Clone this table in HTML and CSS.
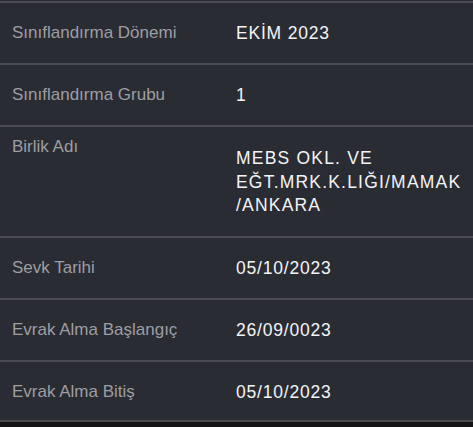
FILE: index.html
```html
<!DOCTYPE html>
<html lang="tr">
<head>
<meta charset="utf-8">
<link rel="stylesheet" href="styles.css">
</head>
<body>
<div class="sheet">
  <div class="row">
    <div class="label">Sınıflandırma Dönemi</div>
    <div class="value">EKİM 2023</div>
  </div>
  <div class="row">
    <div class="label">Sınıflandırma Grubu</div>
    <div class="value">1</div>
  </div>
  <div class="row row-tall">
    <div class="label">Birlik Adı</div>
    <div class="value">
      <span class="line">MEBS OKL. VE</span>
      <span class="line">EĞT.MRK.K.LIĞI/MAMAK</span>
      <span class="line">/ANKARA</span>
    </div>
  </div>
  <div class="row">
    <div class="label">Sevk Tarihi</div>
    <div class="value">05/10/2023</div>
  </div>
  <div class="row">
    <div class="label">Evrak Alma Başlangıç</div>
    <div class="value">26/09/0023</div>
  </div>
  <div class="row">
    <div class="label">Evrak Alma Bitiş</div>
    <div class="value">05/10/2023</div>
  </div>
</div>
</body>
</html>
```

FILE: styles.css
```css
html, body {
  margin: 0;
  padding: 0;
  background: #141416;
}
body {
  width: 473px;
  height: 427px;
  overflow: hidden;
}
.sheet {
  background: #2a2c33;
  padding-top: 1px;
}
.row {
  display: grid;
  grid-template-columns: 224px 1fr;
  align-items: start;
  border-top: 2px solid #4a4c52;
  padding: 20px 0 20px 12px;
  box-sizing: border-box;
  height: 62px;
}
.row:last-child {
  border-bottom: 2px solid #4a4c52;
  height: 62px;
}
.row-tall {
  height: 111px;
}
.row-tall .label {
  margin-top: -10px;
}
.row-tall .value {
  line-height: 23.5px;
  letter-spacing: 1.2px;
}
.label {
  font-family: "Liberation Sans", Arial, sans-serif;
  font-size: 17px;
  line-height: 20px;
  color: #9d9ea3;
  white-space: nowrap;
}
.value {
  font-family: "Liberation Sans", Arial, sans-serif;
  font-size: 17.5px;
  letter-spacing: 0.8px;
  line-height: 20px;
  color: #f4f4f6;
  white-space: nowrap;
}
.line {
  display: block;
}
```
